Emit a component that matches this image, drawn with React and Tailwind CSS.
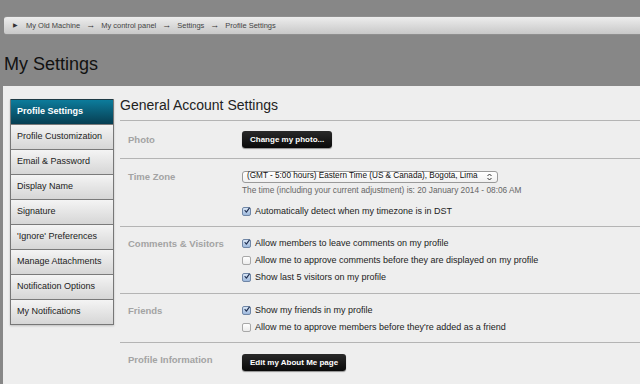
import { useState } from "react";

const crumbs = ["My Old Machine", "My control panel", "Settings", "Profile Settings"];

const menu = [
  "Profile Settings",
  "Profile Customization",
  "Email & Password",
  "Display Name",
  "Signature",
  "'Ignore' Preferences",
  "Manage Attachments",
  "Notification Options",
  "My Notifications",
];

function Check({ on }) {
  return (
    <span
      className={
        "flex h-[9px] w-[9px] shrink-0 items-center justify-center rounded-[2px] border " +
        (on
          ? "border-[#6f86a6] bg-gradient-to-b from-[#d9e6f5] to-[#9db8dc]"
          : "border-[#a8a8a8] bg-gradient-to-b from-white to-[#ececec]")
      }
    >
      {on && (
        <svg width="9" height="9" viewBox="0 0 9 9" className="-mt-[2px] ml-[1px]">
          <path d="M1.5 4.5 L3.6 7 L8 1" fill="none" stroke="#1d2d4f" strokeWidth="1.7" strokeLinecap="round" strokeLinejoin="round" />
        </svg>
      )}
    </span>
  );
}

function Option({ on, children }) {
  const [checked, setChecked] = useState(on);
  return (
    <div className="flex h-[17px] cursor-pointer items-center gap-[4px]" onClick={() => setChecked(!checked)}>
      <Check on={checked} />
      <span className="text-[9px] text-[#222]">{children}</span>
    </div>
  );
}

function Btn({ children }) {
  return (
    <button className="h-[17px] rounded-[3px] bg-gradient-to-b from-[#2a2a2a] to-[#0a0a0a] px-[8px] text-[8px] font-bold text-white shadow-[0_1px_1px_rgba(0,0,0,0.4)]">
      {children}
    </button>
  );
}

function Section({ label, pad, labelPos = "", children }) {
  return (
    <div className={"flex border-t border-[#b4b4b4] " + pad}>
      <div className={"h-[17px] w-[122px] shrink-0 pl-[8px] text-[9.5px] font-bold leading-[17px] text-[#a3a3a3] " + labelPos}>
        {label}
      </div>
      <div className="flex flex-col">{children}</div>
    </div>
  );
}

export default function App() {
  const [active, setActive] = useState("Profile Settings");

  return (
    <div className="h-[384px] w-[640px] overflow-hidden bg-[#878787] font-['Liberation_Sans',Arial,sans-serif]">
      <div className="pl-[4px] pt-[16px]">
        <div className="flex h-[19px] items-center rounded-l-[3px] border-y border-[#8f8f8f] bg-gradient-to-b from-[#ededed] to-[#c8c8c8] pl-[9px] text-[7.5px] text-[#444]">
          <span className="mr-[8px] text-[6px] text-[#333]">▶</span>
          {crumbs.map((c, i) => (
            <span key={c} className="flex items-center">
              {i > 0 && <span className="px-[6px] text-[9px] leading-[9px] text-[#333]">→</span>}
              <span>{c}</span>
            </span>
          ))}
        </div>
      </div>

      <h1 className="pl-[4px] pt-[18px] text-[18px] font-normal leading-[22px] text-[#111]">My Settings</h1>

      <div className="ml-[3px] mt-[11px] flex h-[300px] bg-[#eeeeee] pl-[7px] pt-[13px]">
        <ul className="w-[104px] shrink-0 self-start border border-t-0 border-[#777] shadow-[0_1px_2px_rgba(0,0,0,0.2)]">
          {menu.map((m) => (
            <li
              key={m}
              onClick={() => setActive(m)}
              className={
                "flex h-[25px] cursor-pointer items-center border-t pl-[6px] text-[9px] " +
                (active === m
                  ? "border-[#1d3a45] bg-gradient-to-b from-[#0c7c9c] to-[#073f53] font-bold text-white"
                  : "border-[#7a7a7a] bg-gradient-to-b from-[#f4f4f4] to-[#d6d6d6] text-[#222]")
              }
            >
              {m}
            </li>
          ))}
        </ul>

        <div className="ml-[6px] flex-1">
          <h2 className="-mt-[2px] pb-[7px] text-[14px] font-normal leading-[16px] text-[#222]">General Account Settings</h2>

          <Section label="Photo" pad="pt-[10px] pb-[10px]">
            <Btn>Change my photo...</Btn>
          </Section>

          <Section label="Time Zone" pad="pt-[9px] pb-[6px]">
            <div className="flex h-[17px] items-center">
              <div className="flex h-[12px] w-[256px] items-center justify-between rounded-[3px] border border-[#9a9a9a] bg-gradient-to-b from-white to-[#f0f0f0] pl-[4px] pr-[5px] text-[8.2px] text-[#111]">
                <span>(GMT - 5:00 hours) Eastern Time (US &amp; Canada), Bogota, Lima</span>
                <svg width="5" height="8" viewBox="0 0 5 8">
                  <path d="M0.5 3 L2.5 1 L4.5 3 M0.5 5 L2.5 7 L4.5 5" fill="none" stroke="#333" strokeWidth="1" />
                </svg>
              </div>
            </div>
            <div className="h-[10px] text-[8.3px] leading-[10px] text-[#666]">
              The time (including your current adjustment) is: 20 January 2014 - 08:06 AM
            </div>
            <div className="mt-[8px]">
              <Option on>Automatically detect when my timezone is in DST</Option>
            </div>
          </Section>

          <Section label="Comments & Visitors" pad="pt-[8px] pb-[7px]">
            <Option on>Allow members to leave comments on my profile</Option>
            <Option>Allow me to approve comments before they are displayed on my profile</Option>
            <Option on>Show last 5 visitors on my profile</Option>
          </Section>

          <Section label="Friends" pad="pt-[8px] pb-[6px]">
            <Option on>Show my friends in my profile</Option>
            <Option>Allow me to approve members before they're added as a friend</Option>
          </Section>

          <Section label="Profile Information" pad="pt-[11px] pb-[10px]" labelPos="-mt-[3px]">
            <Btn>Edit my About Me page</Btn>
          </Section>
        </div>
      </div>
    </div>
  );
}
